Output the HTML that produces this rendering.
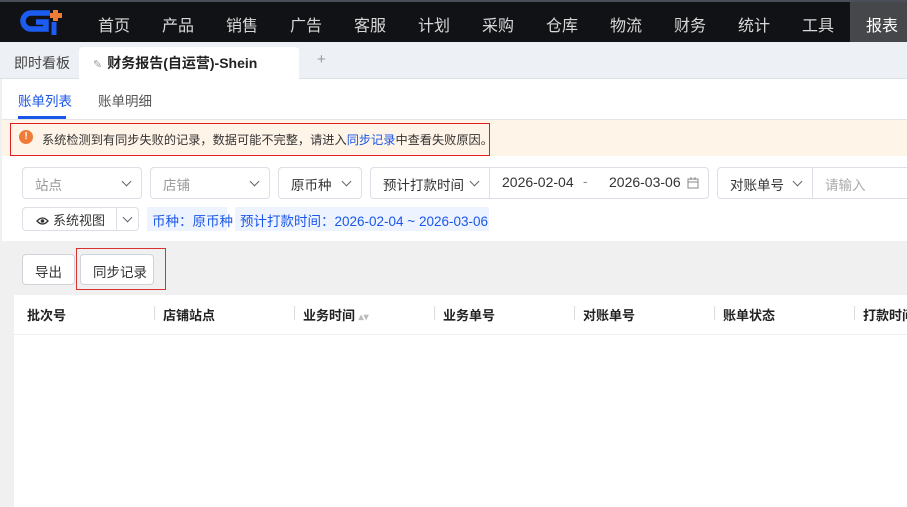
<!DOCTYPE html>
<html><head><meta charset="utf-8"><style>
*{box-sizing:border-box;margin:0;padding:0}
body{width:907px;height:507px;overflow:hidden;font-family:"Liberation Sans","Noto Sans CJK SC",sans-serif;font-size:13px;color:#333;background:#f0f0f0;position:relative}
.nav{position:absolute;left:0;top:0;width:907px;height:42px;background:#111216;border-top:2px solid #4a4f57}
.nav span{position:absolute;top:10px;color:#d8d8d8;font-size:16px}
.nav .act{left:850px;top:0;width:57px;height:40px;background:#46474a;color:#fff;padding:10px 0 0 16px}
.tabs{position:absolute;top:42px;left:0;width:907px;height:37px;background:#edf0f4;border-bottom:1px solid #dde1e6}
.main{position:absolute;top:79px;left:2px;width:905px;height:162px;background:#fff}
.sel{position:absolute;top:167px;height:32px;border:1px solid #dcdfe6;border-radius:4px;background:#fff;font-size:13.5px;padding:6px 12px;white-space:nowrap}
.chev{position:absolute;top:10px;width:7px;height:7px;border-right:1.5px solid #666;border-bottom:1.5px solid #666;transform:rotate(45deg)}
.tag{position:absolute;top:207px;height:24px;background:#eef4ff;color:#1a56e8;padding:3px 5px;font-size:13.5px;white-space:nowrap}
.btn{position:absolute;top:254px;height:31px;border:1px solid #d0d3d9;border-radius:4px;background:#fff;padding:6px 12px;white-space:nowrap;font-size:13.5px}
.th{position:absolute;top:305px;font-weight:bold;font-size:13px;color:#222;white-space:nowrap}
.sep{position:absolute;top:306px;width:1px;height:14px;background:#ddd}
</style></head><body>
<div class="nav">
<svg style="position:absolute;left:20px;top:6px" width="46" height="28" viewBox="0 0 46 28"><path d="M30 5 H11 a8 8 0 0 0 -8 8 a8 8 0 0 0 8 8 h15 V14 H16" fill="none" stroke="#1c5cf0" stroke-width="5.5"/><path d="M34 14 v13" stroke="#1c5cf0" stroke-width="5"/><rect x="33" y="2" width="5" height="11" fill="#f07c3a"/><rect x="30" y="5" width="12" height="5" fill="#f07c3a"/></svg>
<span style="left:98px">首页</span><span style="left:162px">产品</span><span style="left:226px">销售</span><span style="left:290px">广告</span><span style="left:354px">客服</span><span style="left:418px">计划</span><span style="left:482px">采购</span><span style="left:546px">仓库</span><span style="left:610px">物流</span><span style="left:674px">财务</span><span style="left:738px">统计</span><span style="left:802px">工具</span><span class="act">报表</span>
</div>
<div class="tabs">
<span style="position:absolute;left:14px;top:11px;font-size:14px;color:#444">即时看板</span>
<div style="position:absolute;left:79px;top:5px;width:220px;height:32px;background:#fff;border-radius:4px 4px 0 0;padding:6px 0 0 14px;font-weight:bold;font-size:14px;color:#222;white-space:nowrap"><span style="color:#999;font-weight:normal;font-size:11px;margin-right:5px">✎</span>财务报告(自运营)-Shein</div>
<span style="position:absolute;left:317px;top:9px;color:#999;font-size:15px">+</span>
</div>
<div class="main"></div>
<span style="position:absolute;left:18px;top:90px;color:#1a56e8;font-size:13.5px">账单列表</span>
<div style="position:absolute;left:18px;top:116px;width:48px;height:3px;background:#1a56e8"></div>
<span style="position:absolute;left:98px;top:90px;color:#555;font-size:13.5px">账单明细</span>
<div style="position:absolute;left:2px;top:119px;width:905px;height:1px;background:#e5e5e5"></div>
<div style="position:absolute;left:2px;top:120px;width:905px;height:36px;background:#fff4e8"></div>
<div style="position:absolute;left:10px;top:123px;width:480px;height:33px;border:1.5px solid #e02020"></div>
<div style="position:absolute;left:19px;top:130px;width:14px;height:14px;border-radius:50%;background:#f07c3a;color:#fff;font-size:10px;font-weight:bold;text-align:center;line-height:14px">!</div>
<span style="position:absolute;left:42px;top:130px;font-size:12.2px;color:#333;white-space:nowrap">系统检测到有同步失败的记录，数据可能不完整，请进入<span style="color:#1a56e8">同步记录</span>中查看失败原因。</span>
<div class="sel" style="left:22px;width:120px;color:#999">站点<i class="chev" style="left:100px"></i></div>
<div class="sel" style="left:150px;width:120px;color:#999">店铺<i class="chev" style="left:100px"></i></div>
<div class="sel" style="left:278px;width:84px">原币种<i class="chev" style="left:64px"></i></div>
<div class="sel" style="left:370px;width:339px;padding-left:12px">预计打款时间<i class="chev" style="left:100px"></i><div style="position:absolute;left:118px;top:0;width:1px;height:30px;background:#dcdfe6"></div><span style="position:absolute;left:131px;top:6px;font-size:14px">2026-02-04</span><span style="position:absolute;left:212px;top:6px;color:#888">-</span><span style="position:absolute;left:238px;top:6px;font-size:14px">2026-03-06</span><svg style="position:absolute;left:316px;top:9px" width="12" height="12" viewBox="0 0 12 12"><rect x="1" y="2" width="10" height="9" fill="none" stroke="#888"/><path d="M1 5h10M4 0v3M8 0v3" stroke="#888"/></svg></div>
<div class="sel" style="left:717px;width:200px">对账单号<i class="chev" style="left:76px"></i><div style="position:absolute;left:94px;top:0;width:1px;height:30px;background:#dcdfe6"></div><span style="position:absolute;left:107px;top:6px;color:#aaa">请输入</span></div>
<div class="sel" style="left:22px;top:207px;height:24px;width:117px;padding:2px 0 0 13px;font-size:13px"><svg width="13" height="10" viewBox="0 0 13 10" style="vertical-align:-1px;margin-right:4px"><path d="M1 5 Q6.5 -1 12 5 Q6.5 11 1 5Z" fill="none" stroke="#333" stroke-width="1.3"/><circle cx="6.5" cy="5" r="1.8" fill="#333"/></svg>系统视图<div style="position:absolute;left:93px;top:0;width:1px;height:22px;background:#dcdfe6"></div><i class="chev" style="left:101px;top:6px"></i></div>
<div class="tag" style="left:147px;width:80px">币种：原币种</div>
<div class="tag" style="left:235px;width:254px">预计打款时间：2026-02-04 ~ 2026-03-06</div>
<div class="btn" style="left:22px">导出</div>
<div class="btn" style="left:80px;width:74px">同步记录</div>
<div style="position:absolute;left:76px;top:248px;width:90px;height:42px;border:1.5px solid #d93030"></div>
<div style="position:absolute;left:14px;top:295px;width:893px;height:212px;background:#fff"></div>
<div style="position:absolute;left:14px;top:334px;width:893px;height:1px;background:#eee"></div>
<span class="th" style="left:27px">批次号</span><i class="sep" style="left:154px"></i>
<span class="th" style="left:163px">店铺站点</span><i class="sep" style="left:294px"></i>
<span class="th" style="left:303px">业务时间 <span style="color:#bbb;font-size:10px">▴▾</span></span><i class="sep" style="left:434px"></i>
<span class="th" style="left:443px">业务单号</span><i class="sep" style="left:574px"></i>
<span class="th" style="left:583px">对账单号</span><i class="sep" style="left:714px"></i>
<span class="th" style="left:723px">账单状态</span><i class="sep" style="left:854px"></i>
<span class="th" style="left:863px">打款时间</span>
</body></html>
